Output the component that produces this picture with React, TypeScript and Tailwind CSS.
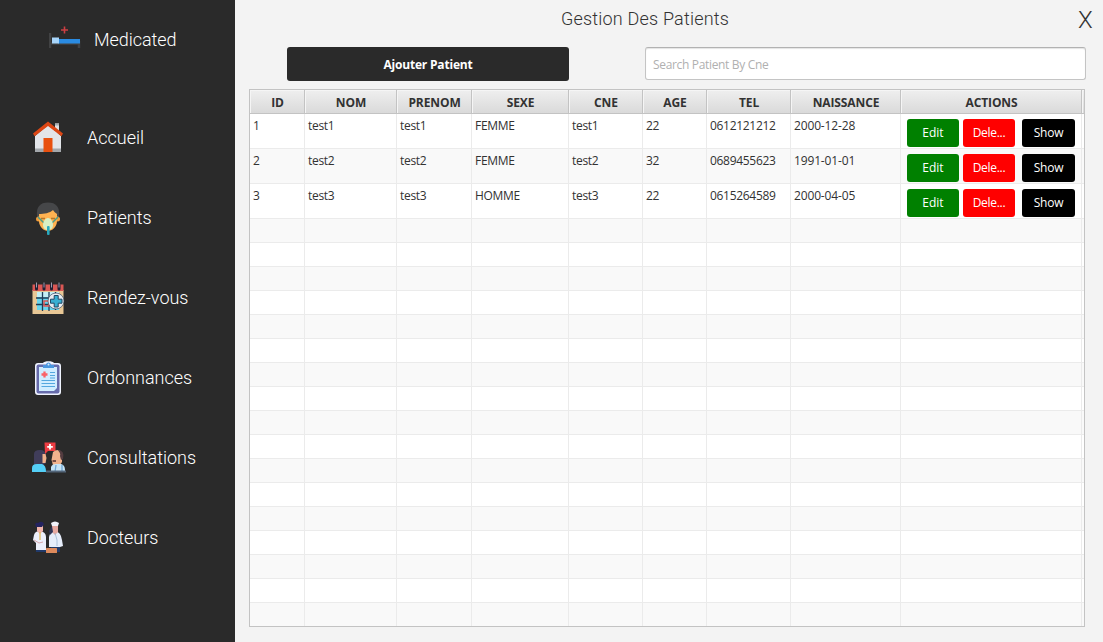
import React from "react";

const HomeIcon = () => (
  <svg width="34" height="34" viewBox="0 0 34 34">
    <rect x="23" y="2.500" width="4" height="10" fill="#dfe1e4" />
    <rect x="23" y="2.500" width="4" height="2" fill="#a9adb2" />
    <path d="M16 4 29 15V31H3V15Z" fill="#e3e5e9" />
    <rect x="3" y="27.500" width="26" height="3.500" fill="#a3a7ab" />
    <rect x="11.500" y="17" width="9" height="14" fill="#e8500f" />
    <path d="M16 .500 1 12.500 2.600 15.200 16 5 29.400 15.200 31 12.500Z" fill="#dc4614" />
  </svg>
);

const PatientIcon = () => (
  <svg width="34" height="34" viewBox="0 0 34 34">
    <path d="M5 15C4 6 8 1.500 16 1.500S28 6 27 15L25 19H7Z" fill="#464749" />
    <circle cx="6.500" cy="18" r="2.500" fill="#f29c38" />
    <circle cx="25.500" cy="18" r="2.500" fill="#f29c38" />
    <path d="M7 13C12 13 18 12 21 9 22 11 24 12 25 13V20C25 26 20 30 16 30S7 26 7 20Z" fill="#ffb251" />
    <path d="M9 17.500h4M19 17.500h4" stroke="#b5762b" strokeWidth="1.300" />
    <path d="M6 16 12 22M26 16 20 22" stroke="#4e9c87" strokeWidth="1.500" />
    <path d="M16 17C19 17 21 21 21 24 21 27 19 29 16 29S11 27 11 24C11 21 13 17 16 17Z" fill="#d9efc4" />
    <rect x="15" y="25" width="2.600" height="9" rx="1" fill="#29a9be" />
  </svg>
);

const CalendarIcon = () => (
  <svg width="34" height="34" viewBox="0 0 34 34">
    <rect x=".500" y="9" width="31" height="24" fill="#e8c795" />
    <rect x="5" y="11" width="22" height="18" fill="#68d5ee" />
    <path d="M5 11h22v5H5Z" fill="#c3eff5" />
    <path d="M.500 3.500h31V10H.500Z" fill="#db5854" />
    <path d="M4 17h24M4 23.500h22M10.500 11v19M17 11v19M23.500 11v18" stroke="#203c56" strokeWidth="1.300" />
    <path d="M12 20h5v5h-5Z" fill="none" stroke="#e15755" strokeWidth="1.500" />
    <g stroke="#221f32" strokeWidth="3" strokeLinecap="round">
      <path d="M4.500 4v4M12 4v4M19.500 4v4M27 4v4" />
    </g>
    <path d="M4.500 1.500v5M12 1.500v5M19.500 1.500v5M27 1.500v5" stroke="#9b9cae" />
    <circle cx="24" cy="20" r="8" fill="#e8edf2" stroke="#24364c" strokeWidth=".600" />
    <path d="M22.200 14.500h4v3.700H30v4h-3.800V26h-4v-3.800h-3.700v-4h3.700Z" fill="#37afd2" stroke="#204864" />
  </svg>
);

const ClipboardIcon = () => (
  <svg width="34" height="36" viewBox="0 0 34 36">
    <path d="M6 3H11C12 .500 21 .500 22 3H26Q29 3 29 6V32Q29 35 26 35H6Q3 35 3 32V6Q3 3 6 3Z" fill="#f0f4ff" />
    <rect x="4.500" y="4.500" width="23" height="29" rx="2" fill="#666bab" />
    <path d="M7 7H25V28L22 31H7Z" fill="#d0edff" />
    <path d="M11 8V5H14C14 1.500 19 1.500 19 5H22V8Z" fill="#4996df" />
    <circle cx="16.500" cy="4.500" r="1" fill="#d7efff" />
    <path d="M12.500 11.500v6M9.500 14.500h6" stroke="#fa6267" strokeWidth="2.300" />
    <path d="M18 12.500h5M18 15.500h5M18 18h5M9.500 20.500h13.500M9.500 23.500h13.500M9.500 26.500h13.500" stroke="#54a8df" strokeWidth="1.200" />
  </svg>
);

const ConsultationIcon = () => (
  <svg width="34" height="32" viewBox="0 0 34 32">
    <path d="M2 24V12Q2 8 8 8Q13 8 14 13V21L10 24Z" fill="#403d5a" />
    <path d="M10.500 12h3l1 4-1 5h-3Z" fill="#eeb18b" />
    <path d="M0 30V26Q0 22 5 22H10Q14 23 14 30Z" fill="#54cff7" />
    <path d="M12.500.500h11v8.500H16l-3 3Z" fill="#ed3d43" />
    <path d="M18 2v5.500M15.200 4.800h5.600" stroke="#fff" strokeWidth="1.800" />
    <path d="M21 10Q27 5 30 12V20L28 23H21L19.500 18Z" fill="#f0b28d" />
    <path d="M25.500 8Q33 8 31 17L29 18 28 14Q29 11 25.500 8Z" fill="#533c40" />
    <path d="M20.500 18h3.500v2h-3.500Z" fill="#784f47" />
    <path d="M19 30V25Q20 22 24 22H29Q33 23 33 28V30Z" fill="#c6e4f7" />
    <path d="M24 23 23 30M30 23v7" stroke="#6fa7d4" strokeWidth="1.300" />
    <path d="M14 29.500h20" stroke="#536579" strokeWidth="2" />
  </svg>
);

const DoctorsIcon = () => (
  <svg width="32" height="34" viewBox="0 0 32 34">
    <path d="M4 26h10v5H4ZM19 25h9v6h-9Z" fill="#203969" />
    <path d="M2 14Q3 10 8 10 14 11 14 16V29H4V22L1 19Z" fill="#edf0fb" />
    <path d="M5 4h6v6L8 13 5 10Z" fill="#f1b6ad" />
    <path d="M4 6Q2 1 6 2 10-1 12 3L10 6Z" fill="#24235f" />
    <path d="M8 11v8" stroke="#e4bb5c" strokeWidth="1.300" />
    <path d="M2 19l5 3 4-1" fill="none" stroke="#d5a7ad" />
    <path d="M17 16Q18 10 23 10 29 11 30 19L31 25 28 26H17Z" fill="#e6edfa" />
    <path d="M20 5h6v6l-3 3-3-3Z" fill="#e7aaa2" />
    <path d="M17 10 20 5 21 11 18 14Z" fill="#303556" />
    <path d="M19 2Q23-1 27 2L26 5H20Z" fill="#f1f2fa" />
    <rect x="14" y="27" width="11" height="5" rx=".500" fill="#dd8a5c" />
    <path d="M23 12l2 7v6" fill="none" stroke="#9ab5d2" strokeWidth=".800" />
  </svg>
);

const BedIcon = () => (
  <svg width="32" height="24" viewBox="0 0 32 24">
    <path d="M15.500 .500v7M12 4h7" stroke="#cb3f43" strokeWidth="1.600" />
    <path d="M1 7v15M30 15v7M1 17.500h29" stroke="#414243" strokeWidth="2.500" />
    <rect x="9" y="13" width="22" height="4.500" fill="#2a8be2" />
    <rect x="3" y="11.500" width="7" height="6" fill="#a8d5fa" />
  </svg>
);

const menu = [
  { label: "Accueil", icon: <HomeIcon /> },
  { label: "Patients", icon: <PatientIcon /> },
  { label: "Rendez-vous", icon: <CalendarIcon /> },
  { label: "Ordonnances", icon: <ClipboardIcon /> },
  { label: "Consultations", icon: <ConsultationIcon /> },
  { label: "Docteurs", icon: <DoctorsIcon /> },
];

const columns = ["ID", "NOM", "PRENOM", "SEXE", "CNE", "AGE", "TEL", "NAISSANCE", "ACTIONS", ""];
const patients = [
  ["1", "test1", "test1", "FEMME", "test1", "22", "0612121212", "2000-12-28"],
  ["2", "test2", "test2", "FEMME", "test2", "32", "0689455623", "1991-01-01"],
  ["3", "test3", "test3", "HOMME", "test3", "22", "0615264589", "2000-04-05"],
];
const grid = "grid grid-cols-[55px_92px_75px_97px_74px_64px_84px_110px_181px_2px]";

export default function App() {
  return (
    <div className="flex h-[642px] w-[1103px] overflow-hidden bg-[#f3f3f3] font-['Open_Sans',sans-serif] text-[#323232]">
      <aside className="w-[235px] shrink-0 bg-[#2a2a2a] font-[Roboto,sans-serif] text-[18px] text-white">
        <div className="flex h-[98px] items-start pt-[26px] pl-[49px]">
          <BedIcon />
          <span className="ml-[13px] leading-7 font-light tracking-[-0.05px]">Medicated</span>
        </div>
        <nav>
          {menu.map((m) => (
            <a key={m.label} className="flex h-20 items-center pl-8">
              <span className="flex w-[55px] items-center">{m.icon}</span>
              <span className="pb-[2px] font-light">{m.label}</span>
            </a>
          ))}
        </nav>
      </aside>
      <main className="w-[868px] pl-[14px]">
        <header className="flex h-[47px] items-start font-[Roboto,sans-serif]">
          <h1 className="w-[792px] pt-[7px] text-center text-[18px] leading-6 font-light tracking-[0.2px]">Gestion Des Patients</h1>
          <button className="ml-[37px] pt-[4px] text-[24px] leading-8 font-light">X</button>
        </header>
        <div className="flex h-[42px] items-start pl-[38px]">
          <button className="h-[34px] w-[282px] rounded-[3px] bg-[#2a2a2a] pt-[2px] text-[12px] font-bold tracking-[-0.2px] text-white">Ajouter Patient</button>
          <input
            className="ml-[76px] h-[33px] w-[441px] rounded-[3px] border border-[#c4c4c4] border-t-[#b2b2b2] bg-white px-[7px] pt-px text-[12px] tracking-[-0.33px] shadow-[inset_0_1px_1px_#e4e4e4] outline-none placeholder:text-[#b0b0b0]"
            placeholder="Search Patient By Cne"
          />
        </div>
        <section className="h-[538px] w-[836px] overflow-hidden border border-[#c3c3c3] bg-white text-[12px]">
          <div className={`${grid} h-6 bg-linear-to-b from-[#efefef] to-[#d9d9d9] font-bold`}>
            {columns.map((c, i) => (
              <div key={i} className="flex items-center justify-center border-r border-b border-[#c3c3c3] pt-[2px] pl-[1px] tracking-[-0.1px] shadow-[inset_1px_1px_0_#f5f5f5] last:border-r-0">
                {c}
              </div>
            ))}
          </div>
          {patients.map((p) => (
            <div key={p[0]} className={`${grid} h-[35px] even:bg-white odd:bg-[#f9f9f9]`}>
              {p.map((v, i) => (
                <div key={i} className="border-r border-b border-[#ebebeb] pt-[3px] pl-[3px] leading-[18px] tracking-[-0.3px] nth-8:tracking-[-0.15px]">
                  {v}
                </div>
              ))}
              <div className="flex items-start border-r border-b border-[#ebebeb] pt-[5px] pl-[6px] text-white">
                <button className="h-7 w-[52px] rounded-[3px] bg-[#008000]">Edit</button>
                <button className="ml-1 h-7 w-[52px] rounded-[3px] bg-[#ff0000] tracking-[-0.3px]">Dele...</button>
                <button className="ml-[7px] h-7 w-[53px] rounded-[3px] bg-black tracking-[-0.2px]">Show</button>
              </div>
              <div className="border-b border-[#ebebeb]" />
            </div>
          ))}
          {Array.from({ length: 17 }, (_, r) => (
            <div key={r} className={`${grid} h-6 even:bg-white odd:bg-[#f9f9f9]`}>
              {columns.map((_, i) => (
                <div key={i} className="border-r border-b border-[#ebebeb] last:border-r-0" />
              ))}
            </div>
          ))}
        </section>
      </main>
    </div>
  );
}
